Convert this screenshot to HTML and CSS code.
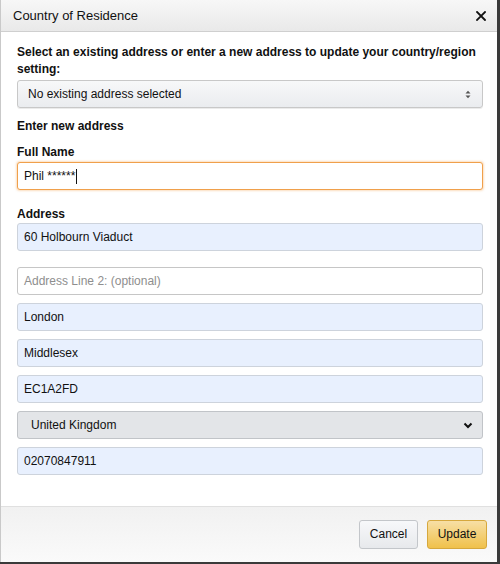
FILE: index.html
```html
<!DOCTYPE html>
<html>
<head>
<meta charset="utf-8">
<link rel="stylesheet" href="styles.css">
</head>
<body>
<div class="modal">
  <div class="header">
    <span class="title">Country of Residence</span>
    <svg class="close" width="10" height="10" viewBox="0 0 10 10"><path d="M1 1L9 9M9 1L1 9" stroke="#111" stroke-width="1.8" stroke-linecap="square"/></svg>
  </div>
  <div class="content">
    <p class="intro">Select an existing address or enter a new address to update your country/region setting:</p>
    <div class="field select-top">
      <span>No existing address selected</span>
      <svg width="6" height="9" viewBox="0 0 6 9"><path d="M0.5 3.5L3 0.8L5.5 3.5Z M0.5 5.5L3 8.2L5.5 5.5Z" fill="#555"/></svg>
    </div>
    <div class="section">Enter new address</div>
    <div class="label">Full Name</div>
    <div class="field focus"><span>Phil ******</span><span class="caret"></span></div>
    <div class="label label-gap">Address</div>
    <div class="field filled">60 Holbourn Viaduct</div>
    <div class="field placeholder gap-lg">Address Line 2: (optional)</div>
    <div class="field filled gap">London</div>
    <div class="field filled gap">Middlesex</div>
    <div class="field filled gap">EC1A2FD</div>
    <div class="field country gap">
      <span>United Kingdom</span>
      <svg width="10" height="7" viewBox="0 0 10 7"><path d="M1.5 1.5L5 5L8.5 1.5" fill="none" stroke="#111" stroke-width="2"/></svg>
    </div>
    <div class="field filled gap">02070847911</div>
  </div>
  <div class="footer">
    <button class="btn cancel">Cancel</button>
    <button class="btn update">Update</button>
  </div>
</div>
</body>
</html>
```

FILE: styles.css
```css
* { box-sizing: border-box; }
html, body { margin: 0; padding: 0; }
body {
  background: #3a3a3a;
  width: 500px;
  height: 564px;
  overflow: hidden;
  font-family: "Liberation Sans", Arial, sans-serif;
  font-size: 12px;
  color: #111;
}
.modal {
  width: 497px;
  height: 562px;
  background: #fff;
  border-left: 1px solid #c9c9c9;
  display: flex;
  flex-direction: column;
}
.header {
  height: 32px;
  flex: none;
  background: linear-gradient(#f7f7f7, #e9e9e9);
  border-bottom: 1px solid #cfcfcf;
  display: flex;
  align-items: center;
  justify-content: space-between;
  padding: 0 11px 0 12px;
}
.title { font-size: 13px; color: #111; }
.close { display: block; }
.content {
  flex: 1;
  padding: 12px 14px 0 16px;
}
.intro {
  margin: 0;
  font-weight: bold;
  line-height: 17px;
}
.field {
  height: 28px;
  border: 1px solid #c6c6c6;
  border-radius: 3px;
  display: flex;
  align-items: center;
  padding: 0 6px;
  line-height: 17px;
  background: #fff;
}
.select-top {
  margin-top: 2px;
  background: linear-gradient(#f7f8f9, #eaecef);
  border-color: #c8c8c8;
  padding: 0 10px;
  justify-content: space-between;
  box-shadow: 0 1px 0 rgba(0,0,0,.08);
}
.select-top svg { margin-right: 1px; }
.section {
  font-weight: bold;
  margin-top: 10px;
  line-height: 17px;
}
.label {
  font-weight: bold;
  margin-top: 9px;
  line-height: 17px;
}
.label-gap { margin-top: 16px; }
.focus {
  margin-top: 1px;
  border-color: #f0a04b;
  box-shadow: 0 0 2px 1px rgba(240,160,75,.35);
}
.caret {
  display: inline-block;
  width: 1px;
  height: 15px;
  background: #111;
  margin-left: 1px;
}
.filled { background: #e8f0fe; border-color: #cdd3dc; }
.placeholder { color: #8e8e8e; }
.gap-lg { margin-top: 16px; }
.gap { margin-top: 8px; }
.country {
  background: #e3e5e8;
  border-color: #c1c4c8;
  padding: 0 9px 0 13px;
  justify-content: space-between;
}
.footer {
  flex: none;
  height: 56px;
  border-top: 1px solid #e0e0e0;
  background: linear-gradient(#f1f1f1, #fafafa);
  display: flex;
  justify-content: flex-end;
  align-items: center;
  gap: 9px;
  padding: 0 10px 1px 0;
}
.btn {
  font-family: "Liberation Sans", Arial, sans-serif;
  font-size: 12px;
  height: 29px;
  border-radius: 3px;
  padding: 0;
  color: #111;
}
.cancel {
  width: 59px;
  background: linear-gradient(#f7f8fa, #e7e9ec);
  border: 1px solid #c3c6ca;
}
.update {
  width: 60px;
  background: linear-gradient(#f7dfa5, #f0c14b);
  border: 1px solid #d6a83d;
}
```
